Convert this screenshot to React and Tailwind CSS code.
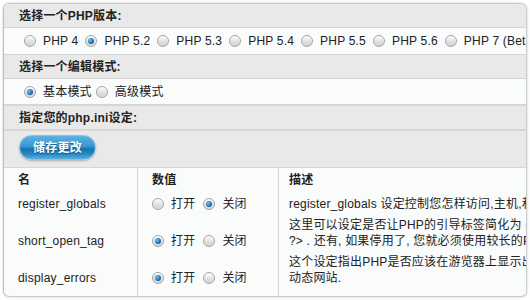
import React, { useState } from "react";

const FONT = { fontFamily: '"Liberation Sans", "Noto Sans CJK SC", Arial, sans-serif' };

// Old-style glossy radio, drawn with spans so it looks like the screenshot
function Radio({ checked }) {
  return (
    <span className="relative inline-flex items-center justify-center w-[12px] h-[12px] shrink-0 rounded-full border border-[#a3a3a3] bg-[linear-gradient(#ffffff,#e6e6e6_45%,#cfcfcf)] shadow-[inset_0_0_1px_#fff]">
      {checked && (
        <span className="w-[6px] h-[6px] rounded-full bg-[radial-gradient(circle_at_35%_35%,#6fc3f2,#1a6fae_60%,#0c4575)]" />
      )}
    </span>
  );
}

function Choice({ label, checked, onClick, className = "", gap = "ml-[7px]" }) {
  return (
    <label onClick={onClick} className={`flex items-center cursor-pointer ${className}`}>
      <Radio checked={checked} />
      <span className={gap}>{label}</span>
    </label>
  );
}

const versions = ["PHP 4", "PHP 5.2", "PHP 5.3", "PHP 5.4", "PHP 5.5", "PHP 5.6", "PHP 7 (Beta)"];

const settings = [
  {
    name: "register_globals",
    on: false,
    desc: ["register_globals 设定控制您怎样访问,主机,和服务器变量."],
    row: "pt-[4px] pb-[1px]",
  },
  {
    name: "short_open_tag",
    on: true,
    desc: [
      "这里可以设定是否让PHP的引导标签简化为 (<? ",
      "?> . 还有, 如果停用了, 您就必须使用较长的PHP引导标签 (<?php ?>).",
    ],
    row: "pt-[4px] pb-[1px]",
  },
  {
    name: "display_errors",
    on: true,
    desc: [
      "这个设定指出PHP是否应该在游览器上显示出错误信息. 这个功能应该在开发时使用, 请勿用于",
      "动态网站.",
    ],
    row: "pt-[4px] pb-[2px]",
  },
];

export default function App() {
  const [version, setVersion] = useState("PHP 5.2");
  const [mode, setMode] = useState("basic");
  const [values, setValues] = useState(settings.map((s) => s.on));

  const setValue = (i, v) => setValues((prev) => prev.map((x, j) => (j === i ? v : x)));

  return (
    <div className="w-[530px] h-[300px] bg-white pt-[3px] pl-[3px]" style={FONT}>
      <div className="w-[524px] h-[294px] rounded-[6px] overflow-hidden border border-[#c9ccd0] border-l-[#a9c5e2] shadow-[0_0_3px_rgba(0,0,0,0.2)] bg-[#fafbfb] text-[12px] tracking-[0.2px] text-[#222]">
        {/* php version */}
        <div className="h-[24px] flex items-center pl-[15px] pt-[1px] bg-[#e9e9e9] border-b border-[#d6d6d6] font-bold">
          选择一个PHP版本:
        </div>
        <div className="h-[27px] flex items-center pl-[20px] whitespace-nowrap border-b border-[#d6d6d6]">
          {versions.map((v) => (
            <Choice key={v} label={v} checked={version === v} onClick={() => setVersion(v)} className="mr-[7px]" />
          ))}
        </div>

        {/* edit mode */}
        <div className="h-[24px] flex items-center pl-[15px] pt-[1px] bg-[#e9e9e9] border-b border-[#d6d6d6] font-bold">
          选择一个编辑模式:
        </div>
        <div className="h-[27px] flex items-center pl-[20px] border-b-2 border-[#d6d6d6]">
          <Choice label="基本模式" checked={mode === "basic"} onClick={() => setMode("basic")} className="mr-[4px]" />
          <Choice label="高级模式" checked={mode === "advanced"} onClick={() => setMode("advanced")} />
        </div>

        {/* php.ini */}
        <div className="h-[25px] flex items-center pl-[15px] pt-[1px] bg-[#e9e9e9] border-b-2 border-[#d6d6d6] font-bold">
          指定您的php.ini设定:
        </div>
        <div className="h-[37px] bg-[#e9e9e9] border-b border-[#d6d6d6] pl-[15px] pt-[4px]">
          <button className="h-[25px] w-[77px] rounded-full border border-[#86c3ea] bg-[linear-gradient(#5db3e2,#3597cf_45%,#1673ae_58%,#2a8bc5_80%,#58afdf)] shadow-[0_1px_2px_rgba(0,0,0,0.25)] text-white font-bold text-[12px] [text-shadow:0_1px_1px_rgba(0,0,0,0.4)]">
            储存更改
          </button>
        </div>

        {/* settings table */}
        <div className="grid grid-cols-[134px_141px_600px] whitespace-nowrap">
          <div className="pl-[14px] h-[24px] flex items-center font-bold border-r border-[#d6d6d6]">名</div>
          <div className="pl-[14px] h-[24px] flex items-center font-bold border-r border-[#d6d6d6]">数值</div>
          <div className="pl-[10px] h-[24px] flex items-center font-bold">描述</div>

          {settings.map((s, i) => (
            <React.Fragment key={s.name}>
              <div className={`pl-[14px] flex items-end border-r border-[#d6d6d6] leading-[16px] ${s.row}`}>
                {s.name}
              </div>
              <div className={`pl-[14px] flex items-end border-r border-[#d6d6d6] leading-[16px] ${s.row}`}>
                <div className="flex items-center h-[16px]">
                  <Choice label="打开" checked={values[i]} onClick={() => setValue(i, true)} className="mr-[8px]" />
                  <Choice label="关闭" checked={!values[i]} onClick={() => setValue(i, false)} />
                </div>
              </div>
              <div className={`pl-[10px] leading-[16px] ${s.row}`}>
                {s.desc.map((line) => (
                  <div key={line}>{line}</div>
                ))}
              </div>
            </React.Fragment>
          ))}
          <div className="h-[30px] border-r border-[#d6d6d6]" />
          <div className="h-[30px] border-r border-[#d6d6d6]" />
          <div />
        </div>
      </div>
    </div>
  );
}
